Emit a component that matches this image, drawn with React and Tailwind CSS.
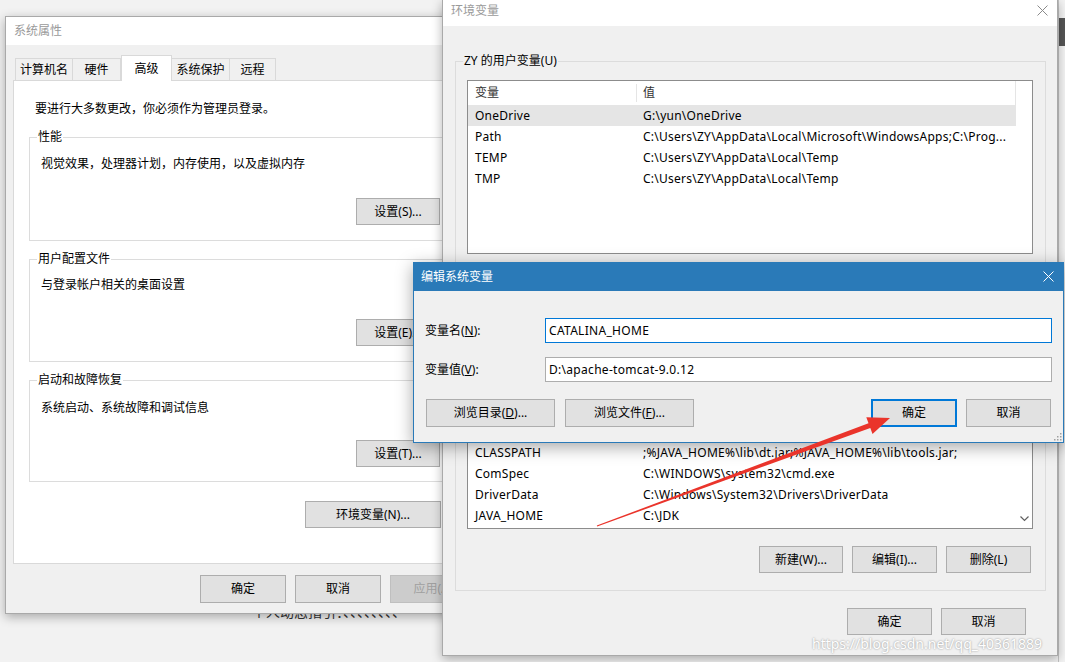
import React from 'react';

const Btn = ({ children, className = '', focus = false }) => (
  <div
    className={`flex items-center justify-center bg-[#e1e1e1] text-[12px] text-black ${
      focus ? 'border-2 border-[#0078d7]' : 'border border-[#adadad]'
    } ${className}`}
  >
    {children}
  </div>
);

const Group = ({ label, labelBg = 'bg-white', children, className = '' }) => (
  <div className={`relative border border-[#dcdcdc] ${className}`}>
    <span className={`absolute -top-[9px] left-[7px] px-px text-[12px] leading-[16px] text-black ${labelBg}`}>{label}</span>
    {children}
  </div>
);

const Row = ({ name, value, active = false }) => (
  <div className={`flex h-[21px] w-[548px] items-center whitespace-nowrap tracking-[0.25px] ${active ? 'bg-[#e5e5e5]' : ''}`}>
    <div className="w-[169px] pl-[7px]">{name}</div>
    <div className="flex-1 pl-[6px]">{value}</div>
  </div>
);

const CloseX = ({ className, color }) => (
  <svg className={className} width="11" height="11" viewBox="0 0 11 11">
    <path d="M0.5 0.5 L10.5 10.5 M10.5 0.5 L0.5 10.5" stroke={color} strokeWidth="1" fill="none" />
  </svg>
);

const SystemProps = () => (
  <div className="absolute left-[5px] top-[16px] w-[475px] border border-[#a9a9a9] bg-[#f0f0f0] shadow-[0_3px_10px_rgba(0,0,0,0.3)]">
    <div className="h-[28px] bg-white pl-[8px] text-[12px] leading-[28px] text-[#9a9a9a]">系统属性</div>
    <div className="pt-[10px]">
      {/* tabs */}
      <div className="ml-[9px] flex h-[25px] items-end text-[12px]">
        <div className="flex h-[22px] w-[58px] items-center justify-center border-x border-t border-[#d9d9d9] bg-[#f0f0f0]">计算机名</div>
        <div className="flex h-[22px] w-[48px] items-center justify-center border-r border-t border-[#d9d9d9] bg-[#f0f0f0]">硬件</div>
        <div className="relative z-10 -mb-px flex h-[26px] w-[51px] items-center justify-center border-x border-t border-[#d9d9d9] bg-white">高级</div>
        <div className="flex h-[22px] w-[58px] items-center justify-center border-r border-t border-[#d9d9d9] bg-[#f0f0f0]">系统保护</div>
        <div className="flex h-[22px] w-[46px] items-center justify-center border-r border-t border-[#d9d9d9] bg-[#f0f0f0]">远程</div>
      </div>

      <div className="mx-[7px] border border-[#d9d9d9] bg-white px-[15px] pb-[35px] pt-[20px] text-[12px] leading-[16px]">
        <div className="pl-[6px]">要进行大多数更改，你必须作为管理员登录。</div>

        <Group label="性能" className="mt-[20px] pb-[15px] pl-[11px] pr-[15px] pt-[18px]">
          <div>视觉效果，处理器计划，内存使用，以及虚拟内存</div>
          <div className="mt-[26px] flex justify-end">
            <Btn className="h-[27px] w-[84px]">设置(S)...</Btn>
          </div>
        </Group>

        <Group label="用户配置文件" className="mt-[18px] pb-[15px] pl-[11px] pr-[15px] pt-[17px]">
          <div>与登录帐户相关的桌面设置</div>
          <div className="mt-[26px] flex justify-end">
            <Btn className="h-[27px] w-[84px]">设置(E)...</Btn>
          </div>
        </Group>

        <Group label="启动和故障恢复" className="mt-[18px] pb-[14px] pl-[11px] pr-[15px] pt-[19px]">
          <div>系统启动、系统故障和调试信息</div>
          <div className="mt-[24px] flex justify-end">
            <Btn className="h-[27px] w-[84px]">设置(T)...</Btn>
          </div>
        </Group>

        <div className="mt-[19px] flex justify-end pr-[15px]">
          <Btn className="h-[27px] w-[136px]">环境变量(N)...</Btn>
        </div>
      </div>

      <div className="flex justify-end gap-[9px] pb-[10px] pr-[3px] pt-[11px]">
        <Btn className="h-[28px] w-[86px]">确定</Btn>
        <Btn className="h-[28px] w-[86px]">取消</Btn>
        <div className="flex h-[28px] w-[86px] items-center justify-center border border-[#bfbfbf] bg-[#cccccc] text-[12px] text-[#a0a0a0]">应用(A)</div>
      </div>
    </div>
  </div>
);

const EnvVars = () => (
  <div className="absolute left-[442px] top-0 w-[616px] border-x border-b border-[#a9a9a9] bg-[#f0f0f0] text-[12px] shadow-[0_3px_10px_rgba(0,0,0,0.3)]">
    <div className="relative h-[26px] bg-white pl-[8px] pt-[3px] leading-[16px] text-[#9a9a9a]">
      环境变量
      <CloseX className="absolute right-[9px] top-[5px]" color="#8a8a8a" />
    </div>

    <div className="pb-[20px] pl-[12px] pr-[11px] pt-[35px]">
      <Group label="ZY 的用户变量(U)" labelBg="bg-[#f0f0f0]" className="pb-[10px] pl-[11px] pr-[12px] pt-[18px]">
        <div className="h-[174px] overflow-hidden border border-[#8c8c8c] bg-white">
          <div className="flex h-[24px] w-[548px] items-center border-r border-[#e5e5e5] text-[#333]">
            <div className="w-[169px] border-r border-[#e5e5e5] pl-[7px]">变量</div>
            <div className="flex-1 pl-[6px]">值</div>
          </div>
          <Row name="OneDrive" value="G:\yun\OneDrive" active />
          <Row name="Path" value="C:\Users\ZY\AppData\Local\Microsoft\WindowsApps;C:\Prog..." />
          <Row name="TEMP" value="C:\Users\ZY\AppData\Local\Temp" />
          <Row name="TMP" value="C:\Users\ZY\AppData\Local\Temp" />
        </div>
        <div className="mt-[10px] flex justify-end gap-[9px] pr-[2px]">
          <Btn className="h-[27px] w-[84px]">新建(N)...</Btn>
          <Btn className="h-[27px] w-[85px]">编辑(E)...</Btn>
          <Btn className="h-[27px] w-[85px]">删除(D)</Btn>
        </div>
      </Group>

      <Group label="系统变量(S)" labelBg="bg-[#f0f0f0]" className="mt-[14px] pb-[17px] pl-[11px] pr-[12px] pt-[18px]">
        <div className="flex h-[194px] border border-[#8c8c8c] bg-white">
          <div className="flex w-[548px] flex-col justify-end overflow-hidden pb-[2px]">
            <Row name="asl.log" value="Destination=file" />
            <Row name="CATALINA_HOME" value="D:\apache-tomcat-9.0.12" />
            <Row name="CLASSPATH" value=";%JAVA_HOME%\lib\dt.jar;%JAVA_HOME%\lib\tools.jar;" />
            <Row name="ComSpec" value="C:\WINDOWS\system32\cmd.exe" />
            <Row name="DriverData" value="C:\Windows\System32\Drivers\DriverData" />
            <Row name="JAVA_HOME" value="C:\JDK" />
          </div>
          <div className="flex flex-1 flex-col items-center justify-end pb-[6px]">
            <svg width="9" height="6" viewBox="0 0 9 6">
              <path d="M0.5 0.5 L4.5 4.5 L8.5 0.5" stroke="#606060" strokeWidth="1.2" fill="none" />
            </svg>
          </div>
        </div>
        <div className="mt-[17px] flex justify-end gap-[9px] pr-[2px]">
          <Btn className="h-[27px] w-[84px]">新建(W)...</Btn>
          <Btn className="h-[27px] w-[85px]">编辑(I)...</Btn>
          <Btn className="h-[27px] w-[85px]">删除(L)</Btn>
        </div>
      </Group>

      <div className="mt-[17px] flex justify-end gap-[9px] pr-[20px]">
        <Btn className="h-[27px] w-[85px]">确定</Btn>
        <Btn className="h-[27px] w-[85px]">取消</Btn>
      </div>
    </div>
  </div>
);

const EditDialog = () => (
  <div className="absolute left-[413px] top-[262px] w-[651px] border border-[#2a7ab8] bg-[#f0f0f0] text-[12px] shadow-[0_4px_16px_rgba(0,0,0,0.35)]">
    <div className="relative flex h-[28px] items-center bg-[#2a7ab8] pl-[7px] text-white">
      编辑系统变量
      <CloseX className="absolute right-[9px] top-[8px]" color="#ffffff" />
    </div>
    <div className="pb-[15px] pl-[11px] pr-[11px] pt-[27px]">
      <div className="flex items-center">
        <div className="w-[120px]">变量名(<span className="underline">N</span>):</div>
        <div className="flex h-[25px] flex-1 items-center border border-[#0078d7] bg-white pl-[3px] tracking-[0.3px]">CATALINA_HOME</div>
      </div>
      <div className="mt-[14px] flex items-center">
        <div className="w-[120px]">变量值(<span className="underline">V</span>):</div>
        <div className="flex h-[25px] flex-1 items-center border border-[#adadad] bg-white pl-[3px] tracking-[0.3px]">D:\apache-tomcat-9.0.12</div>
      </div>
      <div className="mt-[17px] flex">
        <Btn className="ml-px h-[28px] w-[129px]">浏览目录(<span className="underline">D</span>)...</Btn>
        <Btn className="ml-[10px] h-[28px] w-[129px]">浏览文件(<span className="underline">F</span>)...</Btn>
        <div className="flex-1" />
        <Btn focus className="h-[28px] w-[86px]">确定</Btn>
        <Btn className="ml-[9px] mr-px h-[28px] w-[85px]">取消</Btn>
      </div>
    </div>
    <svg className="absolute bottom-px right-px" width="9" height="9" viewBox="0 0 9 9">
      <rect x="7" y="1" width="1.5" height="1.5" fill="#a0a0a0" />
      <rect x="4" y="4" width="1.5" height="1.5" fill="#a0a0a0" />
      <rect x="7" y="4" width="1.5" height="1.5" fill="#a0a0a0" />
      <rect x="1" y="7" width="1.5" height="1.5" fill="#a0a0a0" />
      <rect x="4" y="7" width="1.5" height="1.5" fill="#a0a0a0" />
      <rect x="7" y="7" width="1.5" height="1.5" fill="#a0a0a0" />
    </svg>
  </div>
);

const App = () => {
  return (
    <div className="relative h-[662px] w-[1065px] overflow-hidden bg-[#f2f2f2] font-['Noto_Sans','Noto_Sans_CJK_SC',sans-serif] text-black">
      {/* stuff peeking out behind the windows */}
      <div className="absolute left-[252px] top-[601px] text-[14px] text-[#333]">个人动态指引：、、、、、、、、</div>
      <div className="absolute left-[1058px] top-0 h-[662px] w-[7px] border-l border-[#c4c4c4] bg-[#f3f3f3]">
        <div className="mt-[18px] h-[28px] bg-[#555]" />
      </div>

      <SystemProps />
      <EnvVars />
      <EditDialog />

      {/* red annotation arrow */}
      <svg className="pointer-events-none absolute left-0 top-0" width="1065" height="662" viewBox="0 0 1065 662">
        <polygon
          points="597.2,526.5 596.8,525.5 868.5,423.3 866.3,417.2 890,418 872.5,434 870.3,427.9"
          fill="#ea342b"
        />
      </svg>

      <div className="pointer-events-none absolute left-[812px] top-[633px] text-[14px] text-white [text-shadow:0_0_2px_rgba(0,0,0,0.45)]">
        https://blog.csdn.net/qq_40361889
      </div>
    </div>
  );
};

export default App;
